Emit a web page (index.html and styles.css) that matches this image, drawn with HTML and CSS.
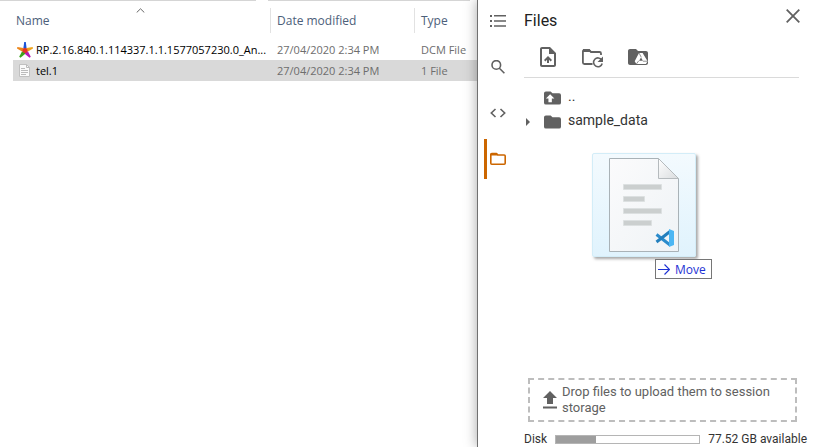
FILE: index.html
```html
<!DOCTYPE html>
<html lang="en">
<head>
<meta charset="utf-8">
<title>Files</title>
<link rel="stylesheet" href="styles.css">
</head>
<body>
<main class="desktop">
  <section class="explorer" aria-label="Folder contents">
    <div class="ribbon-edge"><span></span><span></span></div>
    <svg class="sort-mark" viewBox="0 0 9 5" aria-hidden="true"><path d="M.7 4.5 4.5.8l3.8 3.7"/></svg>
    <table class="listing">
      <colgroup><col class="col-name"><col class="col-date"><col></colgroup>
      <thead>
        <tr><th><div class="head">Name</div></th><th><div class="head divided">Date modified</div></th><th><div class="head divided">Type</div></th></tr>
      </thead>
      <tbody>
        <tr>
          <td><div class="file">
            <svg class="star" viewBox="0 0 16 16" aria-hidden="true">
              <path fill="#1c55d8" d="M7.200 0h1.600l.8 6L8 9 6.400 6z"/>
              <path fill="#f0a51c" d="m15.700 5 .3 1.500-5 3L8 9l1.600-3z"/>
              <path fill="#b51cb5" d="m13.800 14.800-1.300 1L8 12V9l3 .5z"/>
              <path fill="#3da51c" d="m2.200 14.800 1.300 1L8 12V9l-3 .5z"/>
              <path fill="#ed861b" d="M.3 5 0 6.500l5 3L8 9 6.400 6z"/>
              <circle cx="8" cy="8.500" r="2.500" fill="#e33527"/>
            </svg>
            <span>RP.2.16.840.1.114337.1.1.1577057230.0_An...</span></div></td>
          <td><div class="cell">27/04/2020 2:34 PM</div></td><td><div class="cell">DCM File</div></td>
        </tr>
        <tr class="selected">
          <td><div class="file">
            <svg class="page" viewBox="0 0 16 16" aria-hidden="true">
              <path fill="#fafafa" stroke="#c0c0c0" d="M2.500 1.500h7l3 3v9h-10z"/>
              <path fill="none" stroke="#bbb" d="M9.500 1.500v3h3M4 5.500h4M4 7.500h7M4 9.500h7M4 11.500h5"/>
            </svg>
            <span>tel.1</span></div></td>
          <td><div class="cell">27/04/2020 2:34 PM</div></td><td><div class="cell">1 File</div></td>
        </tr>
      </tbody>
    </table>
  </section>

  <aside class="panel">
    <nav class="rail" aria-label="Sections">
      <button class="rail-button" aria-label="Table of contents"><svg viewBox="0 0 16 14"><path fill="currentColor" d="M0 1h2v2H0zM0 6h2v2H0zM0 11h2v2H0zM4 1h12v1.500H4zM4 6.200h12v1.500H4zM4 11.300h12v1.500H4z"/></svg></button>
      <button class="rail-button" aria-label="Find and replace"><svg viewBox="0 0 16 14"><path fill="none" stroke="currentColor" stroke-width="1.600" d="M10.600 4.900a4.300 4.300 0 1 1-8.600 0 4.300 4.300 0 0 1 8.600 0zM9.400 8.200l5 5"/></svg></button>
      <button class="rail-button" aria-label="Code snippets"><svg viewBox="0 0 16 14"><path fill="none" stroke="currentColor" stroke-width="1.600" d="M5.500 3 1.300 7l4.200 4M10.500 3l4.200 4-4.200 4"/></svg></button>
      <button class="rail-button active" aria-label="Files"><svg viewBox="0 0 16 14"><path fill="none" stroke="currentColor" stroke-width="1.600" stroke-linejoin="round" d="M.8 2v9.200q0 1 1 1h12.400q1 0 1-1v-7.200q0-1-1-1H8L6.500 1.500H1.800q-1 0-1 1z"/><path fill="currentColor" d="M1 1h5.500L8 3.500H1z"/></svg></button>
    </nav>

    <div class="content">
      <header class="title-row">
        <h1>Files</h1>
        <button class="close" aria-label="Close"><svg viewBox="0 0 14 14"><path fill="none" stroke="currentColor" stroke-width="1.800" d="m.7.7 12.600 12.600M13.300.7.7 13.300"/></svg></button>
      </header>

      <div class="toolbar">
        <button aria-label="Upload"><svg viewBox="0 0 24 24"><path fill="currentColor" d="M14 2H6c-1.100 0-2 .9-2 2v16c0 1.100.9 2 2 2h12c1.100 0 2-.9 2-2V8zm4 18H6V4h7v5h5zM8 15l1.400 1.400 1.600-1.600V18h2v-3.200l1.600 1.600L16 15l-4-4z"/></svg></button>
        <button aria-label="Refresh"><svg viewBox="0 0 24 24"><path fill="none" stroke="currentColor" stroke-width="1.800" d="M11.500 19H3.500q-1.600 0-1.600-1.500V6.500Q1.900 5 3.500 5H8l2 2h8.500Q20 7 20 8.500V10"/><path fill="currentColor" d="M2 4h6.500l2 3H2zM22 11.500v5.500h-5.500z"/><path fill="none" stroke="currentColor" stroke-width="1.600" d="M20.700 15a4.400 4.400 0 1 0 .5 3.500"/></svg></button>
        <button aria-label="Mount Drive"><svg viewBox="0 0 24 24"><path fill="currentColor" d="M4 4h6l2 2h8c1.100 0 2 .9 2 2v10c0 1.100-.9 2-2 2H4c-1.100 0-2-.9-2-2V6c0-1.100.9-2 2-2z"/><path fill="#fff" fill-rule="evenodd" d="M13 8h3.600l5 8.200-1.700 2.800H10.400l-1.700-2.800zm2 4.600-1.900 3.200h3.800z"/><path fill="none" stroke="currentColor" stroke-width=".7" d="m13 8 2.300 4.300M21.600 16.200h-4.700M10.400 19l2.300-3.200"/></svg></button>
      </div>

      <ul class="tree">
        <li><span class="twist"></span><svg class="folder" viewBox="0 0 18 16" aria-hidden="true"><path fill="currentColor" d="M2 1h5l2 2h7q2 0 2 2v8q0 2-2 2H2q-2 0-2-2V3q0-2 2-2z"/><path fill="#fff" d="m6.500 4 4.500 4.500H8.300v4H4.700v-4H2z"/></svg><span>..</span></li>
        <li><span class="twist"><svg viewBox="0 0 4 8" aria-hidden="true"><path fill="currentColor" d="m0 0 4 4-4 4z"/></svg></span><svg class="folder" viewBox="0 0 18 16" aria-hidden="true"><path fill="currentColor" d="M2 1h5l2 2h7q2 0 2 2v8q0 2-2 2H2q-2 0-2-2V3q0-2 2-2z"/></svg><span>sample_data</span></li>
      </ul>

      <div class="drop-zone">
        <svg viewBox="0 0 14 18" aria-hidden="true"><path fill="currentColor" d="m7 0 7 7h-4v6H4V7H0zM0 15.500h14v2H0z"/></svg>
        <p>Drop files to upload them to session storage</p>
      </div>

      <footer class="disk">
        <span>Disk</span>
        <div class="gauge" role="img" aria-label="Disk usage"><div class="used"></div></div>
        <span>77.52 GB available</span>
      </footer>
    </div>

    <div class="drag">
      <div class="thumb">
        <svg viewBox="0 0 70 94" aria-hidden="true">
          <defs>
            <linearGradient id="sheet" x2="1" y2="1"><stop stop-color="#fbfbfc"/><stop offset="1" stop-color="#eff3f6"/></linearGradient>
            <linearGradient id="fold" x2="1" y2="1"><stop stop-color="#fff"/><stop offset="1" stop-color="#d9dcde"/></linearGradient>
          </defs>
          <path fill="url(#sheet)" stroke="#a9b2b7" d="M.5.5h49l20 20v73H.5z"/>
          <path fill="url(#fold)" stroke="#b5babd" d="M49.500.5v20h20z"/>
          <path fill="#cbcfcf" stroke="#dce0e1" d="M14.500 26.500h38v5h-38zM14.500 38.500h21v5h-21zM14.500 50.500h38v5h-38zM14.500 62.500h28v5h-28z"/>
          <path fill="none" stroke="#2a8bcc" stroke-width="3" d="M47.500 76.500 61 87"/>
          <path fill="none" stroke="#237fbd" stroke-width="3" d="M47.500 84 61 73.500"/>
          <path fill="#4cb6f3" d="m60 71 5 2v14l-5 2z"/>
        </svg>
      </div>
      <div class="move"><svg viewBox="0 0 12 11" aria-hidden="true"><path fill="none" stroke="currentColor" stroke-width="1.200" d="M0 5.500h11.500M6.500.5l5 5-5 5"/></svg>Move</div>
    </div>
  </aside>
</main>
</body>
</html>
```
FILE: styles.css
```css
* { box-sizing: border-box; }

body {
  margin: 0;
  background: #fff;
  font-family: Roboto, sans-serif;
  color: #616161;
}

button {
  display: flex;
  align-items: center;
  justify-content: center;
  padding: 0;
  border: 0;
  background: none;
  color: inherit;
}

svg { display: block; flex: none; }

.desktop {
  display: grid;
  grid-template-columns: minmax(0, 1fr) 337px;
  min-height: 100vh;
  overflow: hidden;
}

/* File explorer */
.explorer {
  position: relative;
  padding-left: 13px;
  font-family: "Open Sans", sans-serif;
  font-size: 11px;
  color: #6d6d6d;
}

.ribbon-edge {
  display: flex;
  gap: 12px;
  height: 1px;
  margin: 0 7px 0 -13px;
}

.ribbon-edge span { flex: 202; background: #d5d5d5; }
.ribbon-edge span:first-child { flex: 256; }

.sort-mark {
  position: absolute;
  top: 8px;
  left: 136px;
  width: 9px;
  height: 5px;
  fill: none;
  stroke: #666;
}

.listing {
  width: 100%;
  table-layout: fixed;
  border-collapse: collapse;
  white-space: nowrap;
}

.col-name { width: 257px; }
.col-date { width: 144px; }

.listing th,
.listing td { padding: 0; text-align: left; }

.head {
  height: 25px;
  margin: 7px 0 6px;
  padding-left: 3px;
  line-height: 25px;
  font-size: 12px;
  font-weight: 400;
  color: #4c607a;
}

.divided { padding-left: 6px; border-left: 1px solid #e2e2e2; }

.cell { padding-left: 7px; line-height: 21px; }

.file {
  display: flex;
  align-items: center;
  gap: 3px;
  padding-left: 4px;
  line-height: 21px;
  color: #000;
}

.file svg { width: 16px; height: 16px; }

.selected { background: #d9d9d9; }

/* Files panel */
.panel {
  position: relative;
  display: flex;
  background: #fff;
  border-left: 1px solid #707070;
  box-shadow: 0 0 12px rgba(0, 0, 0, .35);
}

.rail {
  display: flex;
  flex-direction: column;
  gap: 6px;
  width: 40px;
  padding: 1px 6px;
}

.rail-button {
  width: 25px;
  height: 40px;
  border-left: 3px solid transparent;
}

.rail-button svg { width: 16px; height: 14px; }
.rail-button.active { border-color: #cc6600; color: #cc6600; }

.content {
  display: flex;
  flex: 1;
  flex-direction: column;
  min-width: 0;
  padding-left: 6px;
}

.title-row {
  display: flex;
  align-items: center;
  justify-content: space-between;
  height: 40px;
  padding-right: 14px;
}

.title-row h1 {
  margin: 0;
  font-size: 16px;
  font-weight: 400;
  color: #212121;
}

.close { align-self: flex-start; width: 14px; height: 32px; }
.close svg { width: 14px; height: 14px; }

.toolbar {
  display: flex;
  gap: 21px;
  height: 38px;
  margin-right: 15px;
  padding: 5px 12px 9px;
  border-bottom: 1px solid #dadada;
}

.toolbar svg { width: 24px; height: 24px; }

.tree {
  margin: 8px 0 0;
  padding: 0;
  list-style: none;
  font-size: 14px;
  line-height: 20px;
  color: #616161;
}

.tree li {
  display: flex;
  align-items: center;
  height: 24px;
}

.tree li > span:last-child {
  align-self: flex-start;
  margin-left: 7px;
  color: #333;
}

.twist { width: 20px; padding-left: 2px; }
.twist svg { width: 4px; height: 8px; }
.folder { width: 17px; height: 16px; }

.drop-zone {
  display: flex;
  align-items: center;
  gap: 5px;
  margin: auto 17px 0 4px;
  padding: 4px 13px;
  border: 2px dashed #bdbdbd;
}

.drop-zone svg { width: 14px; height: 18px; }
.drop-zone p { margin: 0; font-size: 13px; line-height: 16px; }

.disk {
  display: flex;
  align-items: center;
  gap: 8px;
  padding: 9px 7px 0 0;
  font-size: 12px;
  line-height: 16px;
  white-space: nowrap;
  color: #333;
}

.gauge { flex: 1; height: 9px; border: 1px solid #b5b5b5; }
.used { width: 28%; height: 100%; background: #9e9e9e; }

/* Dragged file, floating under the pointer */
.drag { position: absolute; top: 153px; left: 114px; }

.thumb {
  display: flex;
  align-items: center;
  justify-content: center;
  width: 104px;
  height: 104px;
  border: 1px solid #d3edf8;
  border-radius: 2px;
  background: linear-gradient(#f3fafe, #e0f3fd);
  box-shadow: 2px 2px 3px rgba(0, 0, 0, .35);
}

.thumb svg { width: 70px; height: 94px; }

.move {
  display: flex;
  align-items: center;
  gap: 5px;
  width: 57px;
  height: 20px;
  margin: 2px 0 0 63px;
  padding-left: 2px;
  border: 1px solid #767676;
  background: #fff;
  font: 12px "Open Sans", sans-serif;
  color: #1e32d4;
}

.move svg { width: 12px; height: 11px; }
```
